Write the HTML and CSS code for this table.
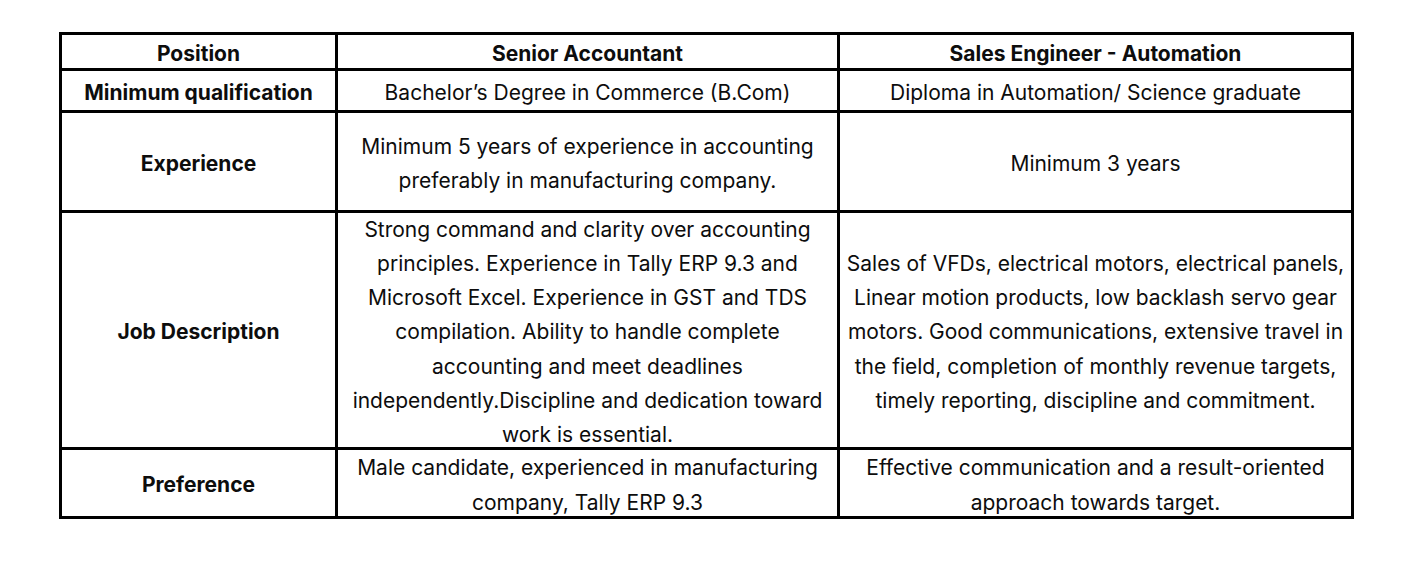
FILE: index.html
```html
<!DOCTYPE html>
<html lang="en">
<head>
<meta charset="utf-8">
<title>Job Openings</title>
<link rel="stylesheet" href="styles.css">
</head>
<body>
<table class="jobs">
  <colgroup>
    <col class="c-label">
    <col class="c-acc">
    <col class="c-sales">
  </colgroup>
  <tbody>
    <tr class="r-head">
      <th><div class="txt">Position</div></th>
      <th><div class="txt">Senior Accountant</div></th>
      <th><div class="txt">Sales Engineer - Automation</div></th>
    </tr>
    <tr class="r-qual">
      <th><div class="txt">Minimum qualification</div></th>
      <td><div class="txt">Bachelor’s Degree in Commerce (B.Com)</div></td>
      <td><div class="txt">Diploma in Automation/ Science graduate</div></td>
    </tr>
    <tr class="r-exp">
      <th><div class="txt">Experience</div></th>
      <td><div class="txt">Minimum 5 years of experience in accounting preferably in manufacturing company.</div></td>
      <td><div class="txt">Minimum 3 years</div></td>
    </tr>
    <tr class="r-desc">
      <th><div class="txt">Job Description</div></th>
      <td><div class="txt">Strong command and clarity over accounting principles. Experience in Tally ERP 9.3 and Microsoft Excel. Experience in GST and TDS compilation. Ability to handle complete accounting and meet deadlines independently.Discipline and dedication toward work is essential.</div></td>
      <td><div class="txt">Sales of VFDs, electrical motors, electrical panels, Linear motion products, low backlash servo gear motors. Good communications, extensive travel in the field, completion of monthly revenue targets, timely reporting, discipline and commitment.</div></td>
    </tr>
    <tr class="r-pref">
      <th><div class="txt">Preference</div></th>
      <td><div class="txt">Male candidate, experienced in manufacturing company, Tally ERP 9.3</div></td>
      <td><div class="txt">Effective communication and a result-oriented approach towards target.</div></td>
    </tr>
  </tbody>
</table>
</body>
</html>
```
FILE: styles.css
```css
html, body {
  margin: 0;
  padding: 0;
  background: #ffffff;
}

body {
  padding: 32px 0 0 59px;
  font-family: Inter, Roboto, "Liberation Sans", Arial, sans-serif;
  color: #0d0d0d;
}

.jobs {
  border-collapse: collapse;
  table-layout: fixed;
  width: 1295px;
  border: 3px solid #000;
}

.c-label { width: 276px; }
.c-acc { width: 502px; }
.c-sales { width: 514px; }

.jobs th,
.jobs td {
  border: 3px solid #000;
  padding: 0 4px;
  text-align: center;
  vertical-align: middle;
  font-size: 21px;
  line-height: 34.2px;
}

.txt {
  margin: -1px 0 -6px;
}

.jobs th { font-weight: 700; }
.jobs td { font-weight: 400; }

.r-head { height: 36px; }
.r-qual { height: 42px; }
.r-exp { height: 100px; }
.r-desc { height: 237px; }
.r-pref { height: 69px; }
```
